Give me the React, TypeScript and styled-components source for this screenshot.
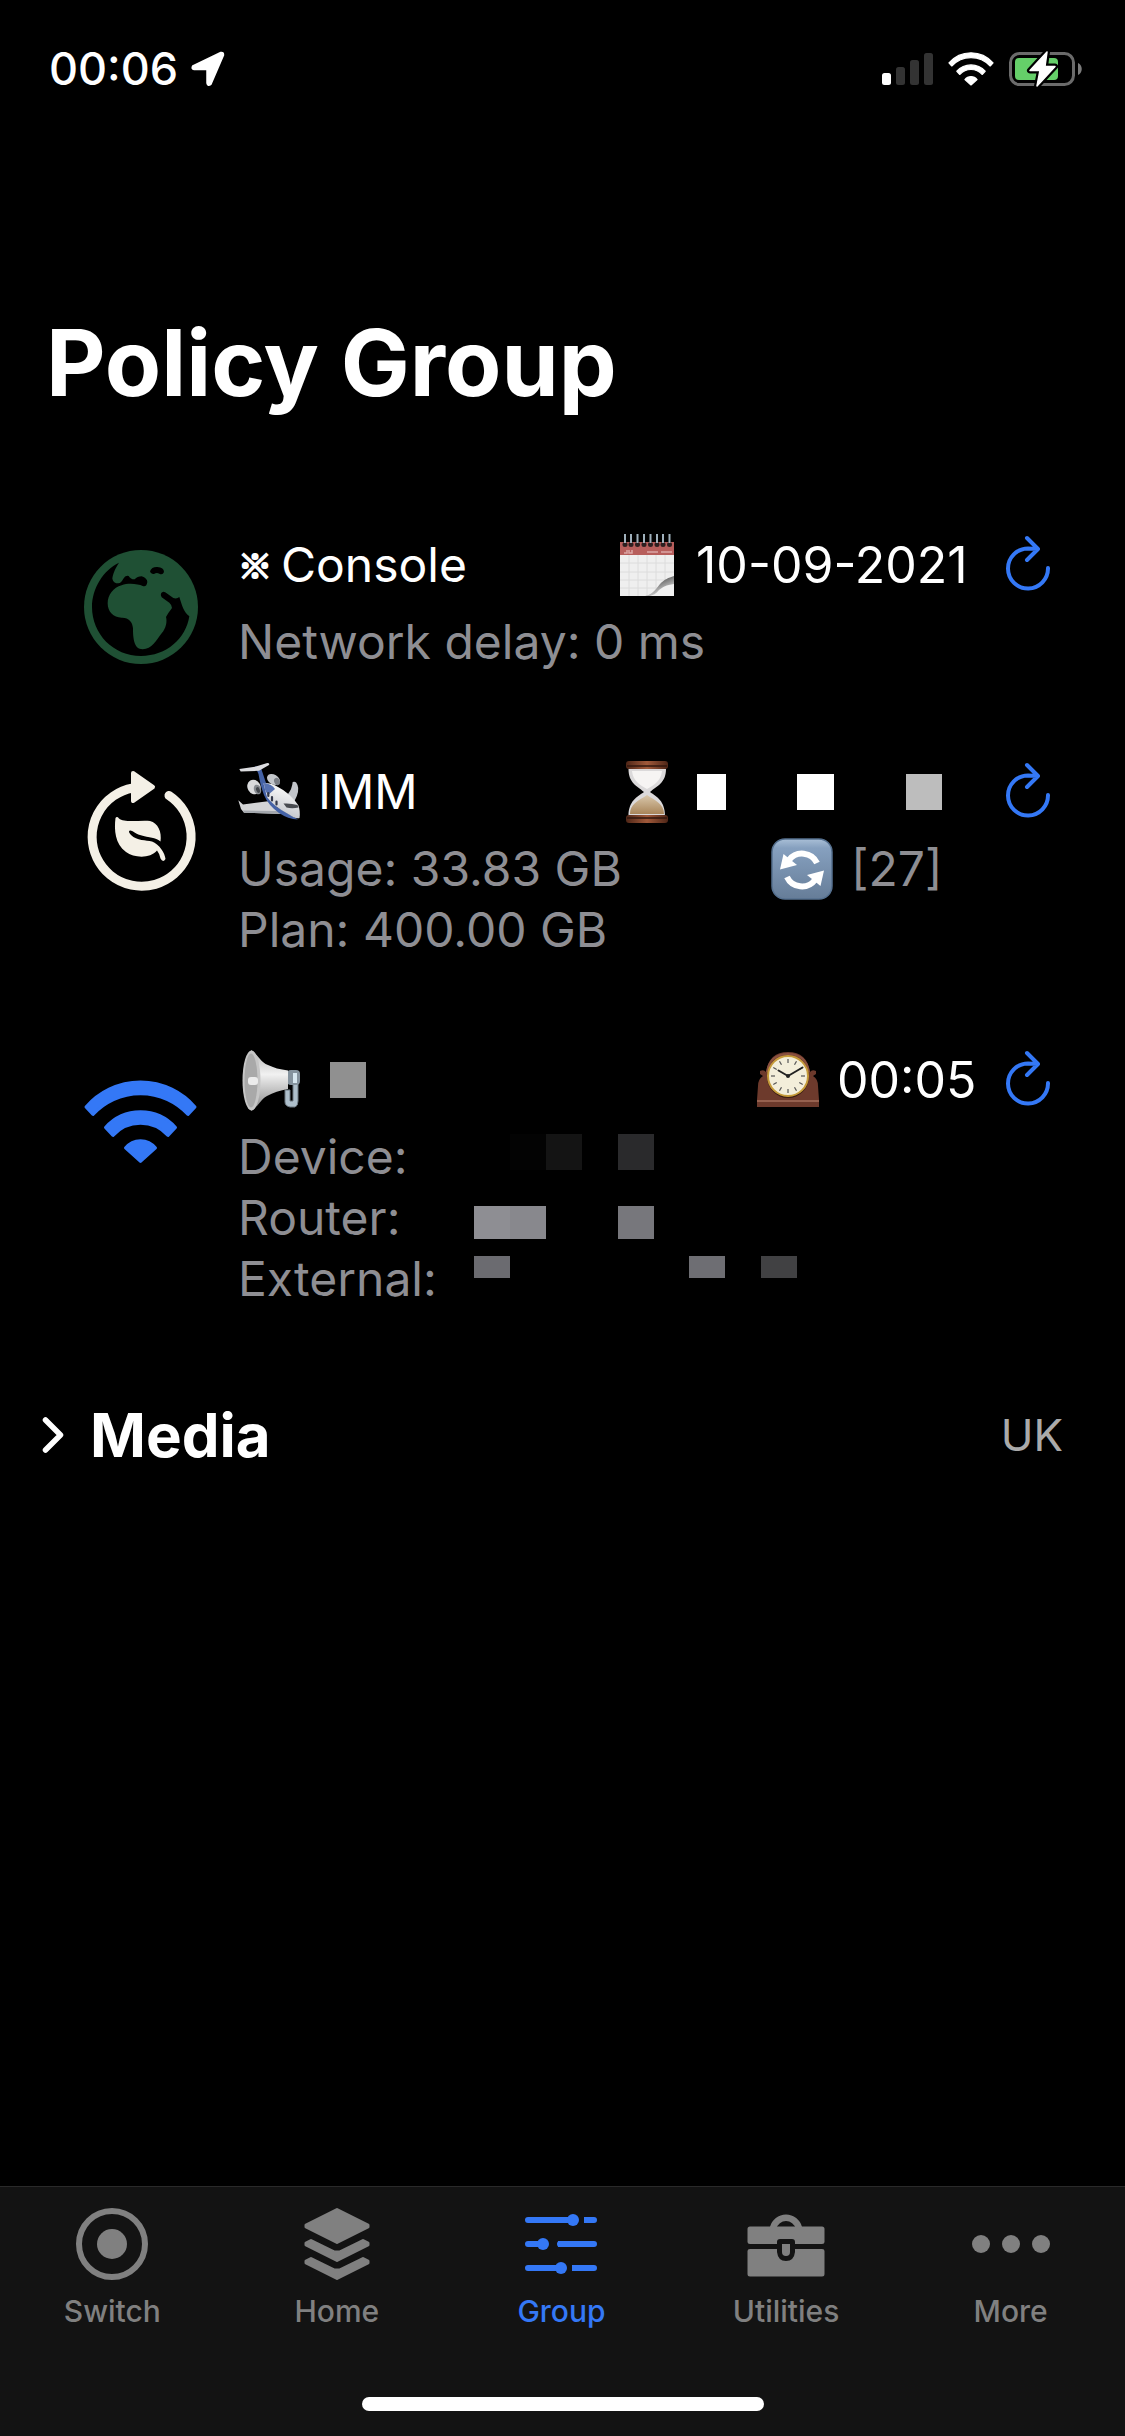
import React from "react";
import styled, { createGlobalStyle } from "styled-components";

const color = {
  text: "#ffffff",
  secondary: "#8e8e93",
  region: "#aaaaaa",
  blue: "#3478f6",
  tab: "#808080",
  bar: "#131313",
  line: "#2a2a2a",
};

const GlobalStyle = createGlobalStyle`
  *, *::before, *::after { box-sizing: border-box; }
  body {
    margin: 0;
    background: #000;
    color: ${color.text};
    font-family: Inter, "Liberation Sans", "Noto Sans CJK JP", sans-serif;
    font-size: 48px;
  }
  button { border: 0; padding: 0; background: none; color: inherit; font: inherit; }
  svg { display: block; overflow: visible; flex: none; }
`;

const Page = styled.div`
  display: flex;
  flex-direction: column;
  min-height: 100vh;
`;

const StatusBar = styled.header`
  display: flex;
  align-items: center;
  justify-content: space-between;
  height: 138px;
  padding: 0 43px 0 49px;
`;

const StatusGroup = styled.div<{ $gap: number }>`
  display: flex;
  align-items: center;
  gap: ${(p) => p.$gap}px;
`;

const Time = styled.time`
  font-size: 45px;
  font-weight: 500;
  line-height: 60px;
`;

const Title = styled.h1`
  margin: 0;
  padding: 165px 46px 0;
  font-size: 92px;
  font-weight: 700;
  line-height: 120px;
`;

const List = styled.ul`
  display: flex;
  flex-direction: column;
  gap: 90px;
  margin: 0;
  padding: 112px 75px 0 81px;
  list-style: none;
`;

const Item = styled.li`
  display: flex;
  gap: 37px;
`;

const ItemIcon = styled.div`
  flex: none;
  width: 120px;
  padding-top: 12px;
`;

const ItemBody = styled.div`
  flex: 1;
  min-width: 0;
`;

const ItemHead = styled.div`
  display: flex;
  align-items: center;
  height: 60px;
  margin-bottom: 16px;
`;

const Name = styled.h2<{ $gap: number }>`
  display: flex;
  flex: 1;
  align-items: center;
  gap: ${(p) => p.$gap}px;
  margin: 0;
  font-size: 48px;
  font-weight: 400;
  line-height: 60px;
`;

const Mark = styled.span`
  font-family: "Noto Sans CJK JP", sans-serif;
  font-size: 34px;
  font-weight: 700;
  line-height: 48px;
  -webkit-text-stroke: 2px currentColor;
`;

const Accessory = styled.div<{ $width: number }>`
  display: flex;
  align-items: center;
  gap: 18px;
  width: ${(p) => p.$width}px;
  line-height: 60px;
`;

const Value = styled.time`
  font-size: 50px;
`;

const RefreshButton = styled.button`
  width: 44px;
  height: 56px;
  color: ${color.blue};
`;

const Details = styled.div`
  color: ${color.secondary};
  line-height: 61px;
`;

const DetailLine = styled.div`
  display: flex;
  justify-content: space-between;
  height: 61px;
`;

const Label = styled.span`
  width: 236px;
`;

const Mosaic = styled.span<{ $height: number; $top?: number }>`
  display: flex;
  flex: 1;
  height: ${(p) => p.$height}px;
  margin-top: ${(p) => p.$top ?? 0}px;
`;

const Tile = styled.span<{ $width: number; $fill: string }>`
  width: ${(p) => p.$width}px;
  background: ${(p) => p.$fill};
`;

const GroupHeader = styled.button`
  display: flex;
  align-items: center;
  margin-top: 88px;
  padding: 0 62px 0 41px;
  text-align: left;
`;

const GroupName = styled.span`
  flex: 1;
  padding-left: 25px;
  font-size: 60px;
  font-weight: 700;
  line-height: 76px;
`;

const Region = styled.span`
  color: ${color.region};
  font-size: 44px;
  line-height: 60px;
`;

const TabBar = styled.nav`
  display: flex;
  flex-direction: column;
  align-items: center;
  margin-top: auto;
  height: 250px;
  border-top: 1px solid ${color.line};
  background: ${color.bar};
`;

const Tabs = styled.div`
  display: flex;
  width: 100%;
  flex: 1;
  padding: 18px 2px 0 0;
`;

const Tab = styled.button<{ $active?: boolean }>`
  display: flex;
  flex: 1;
  flex-direction: column;
  align-items: center;
  gap: 10px;
  color: ${(p) => (p.$active ? color.blue : color.tab)};
  font-size: 30px;
  font-weight: 500;
  line-height: 36px;
`;

const HomeIndicator = styled.div`
  width: 402px;
  max-width: 60%;
  height: 14px;
  margin-bottom: 25px;
  border-radius: 7px;
  background: #fff;
`;

/* ---------- status bar drawings ---------- */

const LocationArrow = () => (
  <svg width="35" height="36" viewBox="0 0 35 36" aria-hidden="true">
    <path
      d="M31 2 L3 15.5 Q2 18 4 18 H17.5 V32 Q18 35 20.500 33 L33 4 Q33 1.500 31 2Z"
      fill="#fff"
      stroke="#fff"
      strokeWidth="2.500"
      strokeLinejoin="round"
    />
  </svg>
);

const Signal = () => (
  <svg width="51" height="32" viewBox="0 0 51 32" aria-hidden="true">
    <rect x="0" y="20" width="9" height="12" rx="2.500" fill="#fff" />
    <rect x="14" y="14" width="9" height="18" rx="2.500" fill="#333" />
    <rect x="28" y="7" width="9" height="25" rx="2.500" fill="#333" />
    <rect x="42" y="0" width="9" height="32" rx="2.500" fill="#333" />
  </svg>
);

const WifiArcs = () => (
  <g fill="currentColor" stroke="currentColor" strokeWidth="3" strokeLinejoin="round">
    <path d="M26 77 A72 72 0 0 1 135 77 L128 84.500 A64.500 64.500 0 0 0 33 84.500Z" />
    <path d="M45.500 97.500 A47 47 0 0 1 115.500 97.500 L108 105.500 A37 37 0 0 0 53 105.500Z" />
    <path d="M65.500 118 A19 19 0 0 1 95.500 118 L80.500 131.500Z" />
  </g>
);

const Battery = () => (
  <svg width="73" height="36" viewBox="0 0 73 36" aria-hidden="true">
    <rect x="1.500" y="2.500" width="63" height="31" rx="9" fill="none" stroke="#6b6b6b" strokeWidth="3" />
    <path d="M69 12 C74 14 74 22 69 24Z" fill="#7c7c7c" />
    <rect x="6" y="7" width="43" height="22" rx="4" fill="#65cf69" />
    <path
      d="M38 1 L21 19.500 H31 L28 35 L46 15.500 H36Z"
      fill="#fff"
      stroke="#000"
      strokeWidth="6"
      strokeLinejoin="round"
      paintOrder="stroke"
    />
    <path d="M38 1 L21 19.500 H31 L28 35 L46 15.500 H36Z" fill="#fff" stroke="#fff" strokeWidth="1.500" strokeLinejoin="round" />
  </svg>
);

/* ---------- list icons ---------- */

const Globe = () => (
  <svg width="120" height="120" viewBox="63 111 360 360" aria-hidden="true">
    <circle cx="243" cy="291" r="171" fill="#1f5034" />
    <path
      fill="#000"
      d="M177 158 C165 175 158 195 157 206 Q160 220 175 220 Q184 218 190 206 Q196 195 206 198 Q213 209 224 208 Q232 199 245 199 Q262 205 262 216 Q260 232 248 228 C235 222 205 218 185 226 C160 232 143 255 143 280 C143 305 160 323 185 323 C205 322 218 335 219 355 C219 385 222 418 248 418 C275 418 290 390 305 370 C318 355 322 335 318 321 Q325 308 336 294 Q336 285 328 278 L305 262 Q298 248 310 245 Q316 246 320 250 L340 264 Q350 268 358 261 C366 285 370 305 388 319 C378 385 320 438 243 438 C160 438 96 372 96 291 C96 235 130 180 177 158Z"
    />
    <path fill="#000" d="M270 184 Q275 170 292 171 Q312 172 312 186 Q308 196 298 191 Q290 186 282 192 Q272 194 270 184Z" />
  </svg>
);

const EcoCycle = () => (
  <svg width="120" height="120" viewBox="21 34 120 120" aria-hidden="true" fill="#f4f0e6">
    <path d="M73 48 A49.500 49.500 0 1 0 109 55.500" fill="none" stroke="#f4f0e6" strokeWidth="9" strokeLinecap="round" />
    <path d="M73 33 L93 47 L73 61Z" stroke="#f4f0e6" strokeWidth="4" strokeLinejoin="round" />
    <path d="M55.500 78 Q57 76 59 78.500 C64 83 80 80 90 81 C98 83 102 92 100.500 101.500 C95 97 90 98 80 95 C75 93.500 72 90 70 90.500 Q67.500 91 71 95 C77 101 86 100 92 101.500 C99 104 105 113 105.500 119 Q103 123 100.500 118.500 Q99.500 113.500 97 110.500 C90 119 74 118 66 112 C55 104 54 90 55.500 78Z" />
  </svg>
);

const WifiIcon = () => (
  <svg width="120" height="120" viewBox="21 32 120 120" aria-hidden="true" color={color.blue}>
    <WifiArcs />
  </svg>
);

const RefreshIcon = () => (
  <svg width="44" height="56" viewBox="406 25 44 56" aria-hidden="true">
    <path
      d="M448 56 A20 20 0 1 1 428 36.500 L437 37 M427 26 L438 37 L427 48"
      fill="none"
      stroke="currentColor"
      strokeWidth="4"
      strokeLinecap="round"
      strokeLinejoin="round"
    />
  </svg>
);

/* ---------- pictographs ---------- */

const Calendar = () => (
  <svg width="62" height="62" viewBox="0 0 62 62" aria-hidden="true">
    <defs>
      <linearGradient id="curl" x1="0.300" y1="0.200" x2="0.800" y2="1">
        <stop offset="0" stopColor="#4c4c4c" />
        <stop offset="0.500" stopColor="#a8a8a8" />
        <stop offset="1" stopColor="#f4f4f4" />
      </linearGradient>
    </defs>
    <rect x="4" y="8" width="54" height="54" fill="#efefef" />
    <path d="M13 21V62 M22 21V62 M31 21V62 M40 21V62 M49 21V48 M4 29H58 M4 38H58 M4 46H50 M4 54H42" stroke="#dcdcdc" strokeWidth="1" />
    <rect x="4" y="8" width="54" height="13" fill="#b75e5c" />
    <path d="M8 19h3v-3 M13 16v3h3v-3 M31 18h11 M45 18h11" stroke="#dca7a5" strokeWidth="1.500" fill="none" />
    <path d="M58 42 C52 44 49 45 44 50 C39 56 37 60 29 62 H58Z" fill="url(#curl)" />
    <path d="M58 50 C50 51 47 53 43 56 C40 60 37 61 34 62 H58Z" fill="#f1f1f1" />
    {[9, 15, 21.5, 28, 34.500, 41, 47, 53.500].map((x) => (
      <g key={x}>
        <circle cx={x} cy="10.500" r="2.500" fill="#2d1f20" />
        <path d={`M${x} 0V9`} stroke="#9fb0bb" strokeWidth="2" />
      </g>
    ))}
  </svg>
);

const Plane = () => (
  <svg width="62" height="62" viewBox="0 -1 62 62" aria-hidden="true">
    <defs>
      <linearGradient id="hull" x1="0.600" y1="0.200" x2="0.400" y2="0.900">
        <stop offset="0" stopColor="#f4f4f4" />
        <stop offset="1" stopColor="#c4c7cd" />
      </linearGradient>
    </defs>
    <path d="M0.300 38.300 L5 42.500 L32 39 L43 52 L6 50.700 L3 47Z" fill="#d3d4d6" />
    <path d="M6 50.700 L43 52 L40 49 L5 48.500Z" fill="#a3a7ad" />
    <path d="M50 32 Q54 27 54.700 20 Q58 18.500 59.500 23 Q62 29 56.500 39Z" fill="#c2c5ca" />
    <path d="M17 4 L23 6 L28 21 L33 23 L29 33 L39 45 L60 57.500 Q50 57 41 51 Q30 43 26 33 Q22.500 24 20.500 12Z" fill="#4462a6" />
    <path d="M25.500 21.500 Q33 20 40 25 Q52 31 60.300 43.300 Q62.500 49 61.500 56 Q57 57 51 52.500 Q35 44 29 35Z" fill="url(#hull)" />
    <path d="M26 21 Q34 22 37 27 L30 33 Q26 28 26 21Z" fill="#5671b0" />
    <path d="M45.500 41.500 Q53 41 59.500 43 L60.500 45.500 Q54 47 48.500 45.500Z" fill="#484b50" />
    <path d="M30.300 31v3 M34 35v3.500 M38.500 39.500v3" stroke="#32384a" strokeWidth="2.200" strokeLinecap="round" />
    <path d="M1.300 7 L17 4.700 L29.300 1 Q32 1 31 3 L21 8.800 L2.700 9.500Z" fill="#dcdde0" />
    <ellipse cx="16" cy="25" rx="6.500" ry="7.500" fill="#d9dadc" transform="rotate(-30 16 25)" />
    <ellipse cx="19.500" cy="27.500" rx="3.500" ry="5" fill="#85898f" transform="rotate(-20 19.500 27.500)" />
    <ellipse cx="20" cy="28" rx="1.800" ry="3" fill="#42464c" transform="rotate(-20 20 28)" />
    <ellipse cx="35.500" cy="17.500" rx="7" ry="4.800" fill="#c4c7cb" transform="rotate(30 35.500 17.500)" />
    <ellipse cx="39" cy="19.500" rx="2.800" ry="3.800" fill="#7a7e85" transform="rotate(-20 39 19.500)" />
  </svg>
);

const Hourglass = () => (
  <svg width="62" height="62" viewBox="0 0 62 62" aria-hidden="true">
    <defs>
      <linearGradient id="wood" x1="0" y1="0" x2="1" y2="0">
        <stop offset="0" stopColor="#4f2617" />
        <stop offset="0.500" stopColor="#a0593a" />
        <stop offset="1" stopColor="#4f2617" />
      </linearGradient>
      <linearGradient id="sand" x1="0" y1="0" x2="0" y2="1">
        <stop offset="0" stopColor="#d9c8ac" />
        <stop offset="1" stopColor="#a9855a" />
      </linearGradient>
    </defs>
    <path d="M12.500 8 H50 C50 22 41 25 34 31 C41 36 49 40 49 55 H12.500 C12.500 40 21 36 28 31 C21 25 12.500 22 12.500 8Z" fill="#dbd9da" />
    <path d="M16 10 H46 C45 20 38 24 31 28 C24 24 17 20 16 10Z" fill="#f6f4f3" />
    <path d="M31 34 C40 40 48 43 48 53 H14 C14 43 22 40 31 34Z" fill="url(#sand)" />
    <rect x="10" y="0" width="42" height="8" rx="3" fill="url(#wood)" />
    <rect x="10" y="54" width="42" height="8" rx="3" fill="url(#wood)" />
    <path d="M11 5H51 M11 57H51" stroke="#32170e" strokeWidth="1.500" />
  </svg>
);

const Sync = () => (
  <svg width="62" height="62" viewBox="0 0 62 62" aria-hidden="true">
    <defs>
      <linearGradient id="tile" x1="0" y1="0" x2="0" y2="1">
        <stop offset="0" stopColor="#a9bfd6" />
        <stop offset="0.150" stopColor="#86a0bf" />
        <stop offset="1" stopColor="#667d98" />
      </linearGradient>
    </defs>
    <rect x="1" y="1" width="60" height="60" rx="13" fill="url(#tile)" stroke="#55708f" strokeWidth="1.500" />
    {[0, 180].map((a) => (
      <g key={a} transform={`rotate(${a} 31 32)`}>
        <path d="M46 25 A16.500 16.500 0 0 0 18 22" fill="none" stroke="#fff" strokeWidth="6" />
        <path d="M12.500 16 L26 27 L9 31.500Z" fill="#fff" />
      </g>
    ))}
  </svg>
);

const Loudspeaker = () => (
  <svg width="62" height="62" viewBox="0 -1 62 62" aria-hidden="true">
    <defs>
      <linearGradient id="cone" x1="0" y1="0" x2="0" y2="1">
        <stop offset="0" stopColor="#b5b5b5" />
        <stop offset="0.400" stopColor="#f1f1f1" />
        <stop offset="1" stopColor="#858585" />
      </linearGradient>
    </defs>
    <path d="M47 40 V52 Q47 56 52 57 H57 Q60 56 60 51 V29 H55 V51 H52 V40Z" fill="#aebfcb" stroke="#6c7881" />
    <rect x="49" y="20" width="13" height="15" rx="4" fill="#85939e" />
    <rect x="55" y="23" width="4" height="10" fill="#d7e7f0" />
    <path d="M13 0 C20 4 22 12 30 15 Q38 19 50 20.500 V39 Q38 41 29 46 C22 50 20 57 13 61Z" fill="url(#cone)" />
    <ellipse cx="13.500" cy="30.500" rx="9" ry="30" fill="#c6c6c6" />
    <ellipse cx="13" cy="30.500" rx="6.500" ry="27" fill="#a9a9a9" />
    <rect x="10" y="27" width="10" height="8" rx="3" fill="#ececec" />
  </svg>
);

const MantelClock = () => (
  <svg width="62" height="62" viewBox="0 -3 62 62" aria-hidden="true">
    <path d="M3 19 Q7 17 9 20 Q12 0 31 0 Q50 0 53 20 Q55 17 59 19 V22 L56 24 Q61 27 61 34 L62 48 V55 H0 V48 L1 34 Q1 27 6 24 L3 22Z" fill="#6d3a2c" />
    <path d="M0 49 H62" stroke="#96614f" strokeWidth="2" />
    <path d="M10 20 Q13 2 31 2 Q49 2 52 20" fill="none" stroke="#8a5140" strokeWidth="2" />
    <circle cx="31" cy="25" r="21" fill="#3c1d12" />
    <circle cx="31" cy="24" r="20" fill="#f3eeda" stroke="#c69b3a" strokeWidth="2" />
    {[0, 30, 60, 90, 120, 150, 180, 210, 240, 270, 300, 330].map((a) => (
      <path key={a} d="M31 7V11" stroke="#555" strokeWidth="1.200" transform={`rotate(${a} 31 24)`} />
    ))}
    <path d="M31 24 L45.500 15.500 M31 24 L21.500 18.500" stroke="#222" strokeWidth="2" strokeLinecap="round" />
    <circle cx="31" cy="24" r="2" fill="#222" />
  </svg>
);

const Chevron = () => (
  <svg width="24" height="38" viewBox="0 0 24 38" aria-hidden="true">
    <path d="M4.500 4 L19.500 19 L4.500 34" fill="none" stroke="#fff" strokeWidth="5.500" strokeLinecap="round" strokeLinejoin="round" />
  </svg>
);

/* ---------- tab icons ---------- */

const tabIcons = {
  Switch: (
    <>
      <circle cx="39" cy="39" r="33" fill="none" stroke="currentColor" strokeWidth="6" />
      <circle cx="39" cy="39" r="15" />
    </>
  ),
  Home: (
    <g stroke="currentColor" strokeWidth="3" strokeLinejoin="round">
      <path d="M39 4.500 L70 20 V22 L39 37.500 L8 22 V20Z" />
      <path d="M13 35.500 L8 38 V40 L39 55.500 L70 40 V38 L65 35.500 L41.500 47 H36.500Z" />
      <path d="M13 53.500 L8 56 V58 L39 73.500 L70 58 V56 L65 53.500 L41.500 65 H36.500Z" />
    </g>
  ),
  Group: (
    <>
      <g fill="none" stroke="currentColor" strokeWidth="6" strokeLinecap="round">
        <path d="M6 15H48 M6 39H18 M6 63H37" />
        <path d="M65 15H72 M38 39H72 M53 63H72" />
      </g>
      <path d="M62 12h4v6h-4z M36 36h4v6h-4z M50 60h4v6h-4z" />
      <circle cx="51" cy="15" r="6" />
      <circle cx="21" cy="39" r="6" />
      <circle cx="39" cy="63" r="6" />
    </>
  ),
  Utilities: (
    <>
      <path d="M26 23 A13.500 14 0 0 1 52 23" fill="none" stroke="currentColor" strokeWidth="6.500" />
      <path d="M3 21.500 H75 Q77.500 21.500 77.500 24 V37 Q77.500 39 75 39 H48 V37 Q48 34 45 34 H33 Q30 34 30 37 V39 H3 Q0.500 39 0.500 37 V24 Q0.500 21.500 3 21.500Z" />
      <path d="M3 44 H30 V47 Q31 56 39 56 Q47 56 48 47 V44 H75 Q77.500 44 77.500 46 V69 Q77.500 71.500 75 71.500 H3 Q0.500 71.500 0.500 69 V46 Q0.500 44 3 44Z" />
      <path d="M35 39 H43 V47 Q43 51 39 51 Q35 51 35 47Z" />
    </>
  ),
  More: (
    <>
      <circle cx="9" cy="39" r="9" />
      <circle cx="39" cy="39" r="9" />
      <circle cx="69" cy="39" r="9" />
    </>
  ),
};

/* ---------- composed parts ---------- */

type Run = [width: number, fill?: string];

const Redacted = ({ runs, height, top }: { runs: Run[]; height: number; top?: number }) => (
  <Mosaic $height={height} $top={top}>
    {runs.map(([w, fill], i) => (
      <Tile key={i} $width={w} $fill={fill ?? "transparent"} />
    ))}
  </Mosaic>
);

const Refresh = ({ label }: { label: string }) => (
  <RefreshButton type="button" aria-label={label}>
    <RefreshIcon />
  </RefreshButton>
);

export default function App() {
  return (
    <Page>
      <GlobalStyle />
      <StatusBar>
        <StatusGroup $gap={12}>
          <Time>00:06</Time>
          <LocationArrow />
        </StatusGroup>
        <StatusGroup $gap={15}>
          <Signal />
          <svg width="46" height="34" viewBox="24 50 113 84" color="#fff" aria-hidden="true">
            <WifiArcs />
          </svg>
          <Battery />
        </StatusGroup>
      </StatusBar>

      <main>
        <Title>Policy Group</Title>
        <List>
          <Item>
            <ItemIcon>
              <Globe />
            </ItemIcon>
            <ItemBody>
              <ItemHead>
                <Name $gap={9}>
                  <Mark>※</Mark>
                  Console
                </Name>
                <Accessory $width={390}>
                  <Calendar />
                  <Value>10-09-2021</Value>
                </Accessory>
                <Refresh label="Refresh Console" />
              </ItemHead>
              <Details>
                <DetailLine>Network delay: 0 ms</DetailLine>
              </Details>
            </ItemBody>
          </Item>

          <Item>
            <ItemIcon>
              <EcoCycle />
            </ItemIcon>
            <ItemBody>
              <ItemHead>
                <Name $gap={18}>
                  <Plane />
                  IMM
                </Name>
                <Accessory $width={390}>
                  <Hourglass />
                  <Redacted height={36} runs={[[1], [29, "#fff"], [71], [37, "#fff"], [72], [36, "#bdbdbd"]]} />
                </Accessory>
                <Refresh label="Refresh IMM" />
              </ItemHead>
              <Details>
                <DetailLine>
                  <span>Usage: 33.83 GB</span>
                  <Accessory $width={279}>
                    <Sync />
                    <span>[27]</span>
                  </Accessory>
                </DetailLine>
                <DetailLine>Plan: 400.00 GB</DetailLine>
              </Details>
            </ItemBody>
          </Item>

          <Item>
            <ItemIcon>
              <WifiIcon />
            </ItemIcon>
            <ItemBody>
              <ItemHead>
                <Name $gap={18}>
                  <Loudspeaker />
                  <Redacted height={36} runs={[[12], [36, "#909090"]]} />
                </Name>
                <Accessory $width={249}>
                  <MantelClock />
                  <Value>00:05</Value>
                </Accessory>
                <Refresh label="Refresh network" />
              </ItemHead>
              <Details>
                <DetailLine>
                  <Label>Device:</Label>
                  <Redacted height={36} top={8} runs={[[36], [36, "#030303"], [36, "#141414"], [36], [36, "#2a2a2c"]]} />
                </DetailLine>
                <DetailLine>
                  <Label>Router:</Label>
                  <Redacted height={33} top={19} runs={[[36, "#8e8e93"], [36, "#88888d"], [72], [36, "#77777c"]]} />
                </DetailLine>
                <DetailLine>
                  <Label>External:</Label>
                  <Redacted height={22} top={8} runs={[[36, "#6b6b70"], [179], [36, "#6e6e73"], [36], [36, "#414143"]]} />
                </DetailLine>
              </Details>
            </ItemBody>
          </Item>
        </List>
      </main>

      <GroupHeader type="button" aria-expanded={false}>
        <Chevron />
        <GroupName>Media</GroupName>
        <Region>UK</Region>
      </GroupHeader>

      <TabBar>
        <Tabs>
          {Object.entries(tabIcons).map(([name, icon]) => (
            <Tab key={name} type="button" $active={name === "Group"} aria-current={name === "Group" ? "page" : undefined}>
              <svg width="78" height="78" viewBox="0 0 78 78" fill="currentColor" aria-hidden="true">
                {icon}
              </svg>
              {name}
            </Tab>
          ))}
        </Tabs>
        <HomeIndicator />
      </TabBar>
    </Page>
  );
}
